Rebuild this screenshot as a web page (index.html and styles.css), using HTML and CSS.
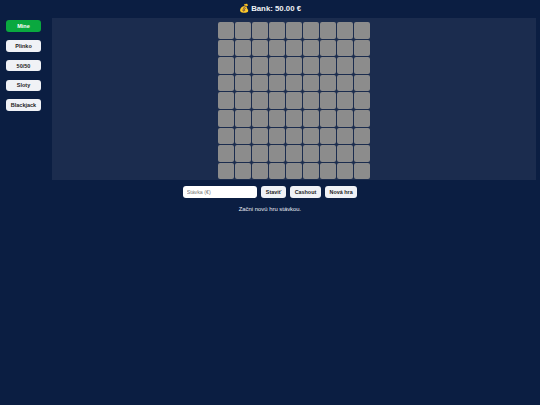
FILE: index.html
```html
<!DOCTYPE html>
<html lang="cs">
<head>
  <meta charset="UTF-8" />
  <title>Casino</title>
  <link rel="stylesheet" href="styles.css">
</head>
<body>
  <header class="bank"><span class="bag">💰</span> Bank: 50.00 €</header>
  <div class="layout">
    <nav class="sidebar">
      <button class="nav-btn active">Mine</button>
      <button class="nav-btn">Plinko</button>
      <button class="nav-btn">50/50</button>
      <button class="nav-btn">Sloty</button>
      <button class="nav-btn">Blackjack</button>
    </nav>
    <main class="board">
      <div class="grid" id="grid"></div>
    </main>
  </div>
  <div class="controls">
    <input class="bet" type="text" placeholder="Stávka (€)">
    <button class="ctl-btn">Staviť</button>
    <button class="ctl-btn">Cashout</button>
    <button class="ctl-btn">Nová hra</button>
  </div>
  <p class="message">Začni novú hru stávkou.</p>

  <script>
    const grid = document.getElementById("grid");
    for (let i = 0; i < 81; i++) {
      const cell = document.createElement("div");
      cell.className = "cell";
      grid.appendChild(cell);
    }
  </script>
</body>
</html>
```

FILE: styles.css
```css
* { box-sizing: border-box; }
html, body { height: 100%; }
body { margin: 0; background: #0b1e42; color: #fff; font-family: "Liberation Sans", Arial, sans-serif; overflow: hidden; }
.bank { height: 17.5px; line-height: 17px; text-align: center; font-size: 7.8px; font-weight: bold; color: #f0f2f6; }
.bag { font-size: 8.4px; }
.layout { display: flex; padding-right: 4px; }
.sidebar { width: 51.5px; padding: 2.7px 0 0 6px; display: flex; flex-direction: column; gap: 8.2px; }
.nav-btn { width: 35px; height: 11.6px; padding: 0; border: none; border-radius: 3px; background: #f0f2f6; color: #1c1c1c; font-family: inherit; font-size: 5.5px; font-weight: bold; }
.nav-btn.active { background: #0aa83f; color: #fff; }
.board { flex: 1; height: 162.5px; padding-top: 4.5px; background: #1b2c4e; display: flex; justify-content: center; }
.grid { display: grid; grid-template-columns: repeat(9, 16px); grid-auto-rows: 16.6px; gap: 1px; }
.cell { background: #8c8c8c; border-radius: 2px; }
.controls { margin-top: 6px; display: flex; justify-content: center; gap: 4px; align-items: center; }
.bet { width: 74.5px; height: 12px; padding: 0 4px; border: none; border-radius: 3px; background: #fff; font-family: inherit; font-size: 5.3px; }
.bet::placeholder { color: #777; }
.ctl-btn { height: 12px; padding: 0 4.7px; border: none; border-radius: 3px; background: #f0f2f6; color: #1c1c1c; font-family: inherit; font-size: 5.4px; font-weight: bold; }
.message { margin: 8px 0 0; text-align: center; font-size: 5.9px; color: #e8ecf2; }
```
